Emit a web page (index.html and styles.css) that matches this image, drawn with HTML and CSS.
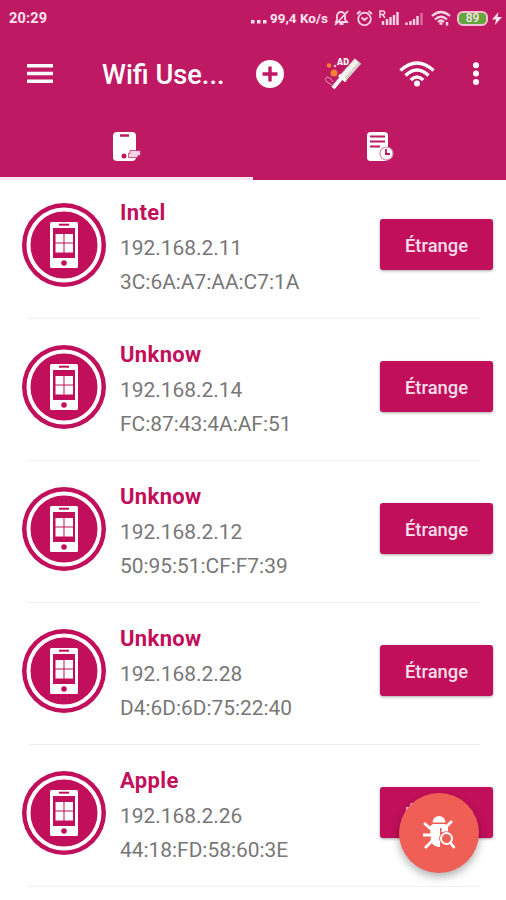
FILE: index.html
```html
<!DOCTYPE html>
<html lang="fr">
<head>
    <meta charset="UTF-8">
    <meta name="viewport" content="width=device-width, initial-scale=1.0">
    <title>Wifi Users</title>
    <link rel="stylesheet" href="styles.css">
</head>
<body>

    <!-- Shared icon for the device list -->
    <svg class="sprite">
        <symbol id="device" viewBox="0 0 84 84">
            <circle cx="42" cy="42" r="42" fill="#c20f5b"/>
            <circle cx="42" cy="42" r="35.5" fill="none" stroke="#fff" stroke-width="4"/>
            <rect x="28" y="19" width="28" height="46" rx="1.5" fill="#fff"/>
            <path d="M37 21.7h10" stroke="#c20f5b" stroke-width="2"/>
            <rect x="31" y="25" width="22" height="30" fill="#c20f5b"/>
            <path d="M33.500 31h8v8.500h-8zM42.500 31h8.500v8.500h-8.500zM33.500 40.500h8v9h-8zM42.500 40.500h8.500v9h-8.500z" fill="#fff"/>
            <circle cx="42" cy="60" r="2.800" fill="#c20f5b"/>
        </symbol>
    </svg>

    <header class="header">
        <div class="status-bar">
            <span class="time">20:29</span>
            <svg class="dots" width="18" height="5" viewBox="0 0 18 5"><path fill="#ffe4f0" d="M1 1h3.500v3.500H1zM7 1h3.500v3.500H7zM13 1h3.500v3.500H13z"/></svg>
            <span class="speed">99,4 Ko/s</span>
            <svg class="bell" width="17" height="16" viewBox="0 0 17 16" fill="none" stroke="#fbd5e6" stroke-width="1.800">
                <path d="M3 12h11l-2-2.500V6a4 4 0 0 0-8 0v3.500zM6.500 14h4M2 15L15 1"/>
            </svg>
            <svg class="alarm" width="17" height="17" viewBox="0 0 17 17" fill="none" stroke="#fbd5e6" stroke-width="1.800">
                <circle cx="8.500" cy="9" r="6.300"/>
                <path d="M1 4l3.500-3M16 4l-3.500-3M5.500 7.500l3 2.500 3-2.500"/>
            </svg>
            <svg class="signal" width="20" height="16" viewBox="0 0 20 16" fill="none" stroke="#fbd5e6">
                <path stroke-width="2.400" d="M4 15v-4M8 15V9M11.500 15V7M15 15V5M18.500 15V2"/>
                <path stroke-width="1.500" d="M1 8V1h3a1.500 1.500 0 0 1 0 3.500H1M3.500 4.500L6 8"/>
            </svg>
            <svg class="signal-two" width="19" height="14" viewBox="0 0 19 14" fill="none" stroke="#fbd5e6" stroke-width="2.400">
                <path d="M1.500 13v-2.500M5.500 13V9M9 13V7M12.500 13V4"/>
                <path opacity=".45" d="M16.500 13V1"/>
            </svg>
            <svg class="wifi-small" width="20" height="16" viewBox="0 0 20 16" fill="none" stroke="#fbd5e6" stroke-width="2.200">
                <path d="M1 6q9-8 18 0M4 9.500q6-5.500 12 0M7 12q3-3 6 0"/>
                <path d="M8.500 13.500h3M16 12v3.500" stroke-width="2.500"/>
            </svg>
            <span class="battery">89</span>
            <svg class="bolt" width="10" height="13" viewBox="0 0 10 13"><path fill="#ffe4f0" d="M6.500 0L0 7.500h4L3 13l7-8H5.500z"/></svg>
        </div>

        <div class="toolbar">
            <svg class="menu" width="26" height="20" viewBox="0 0 26 20"><path fill="#fff" d="M0 0h26v3.500H0zM0 7.800h26v3.500H0zM0 15.500h26V19H0z"/></svg>
            <h1 class="title">Wifi Use...</h1>
            <svg class="add" width="28" height="28" viewBox="0 0 28 28">
                <circle cx="14" cy="14" r="14" fill="#fff"/>
                <path d="M14 6.500v15M6.500 14h15" stroke="#bf1963" stroke-width="3.400"/>
            </svg>
            <svg class="ad" width="40" height="34" viewBox="0 0 40 34">
                <path d="M10 31L20 19" stroke="#fff" stroke-width="4"/>
                <path d="M19 22L35 4" stroke="#d8cfcc" stroke-width="8.500"/>
                <path d="M18.500 21L33.500 4" stroke="#f7f3ed" stroke-width="4.500"/>
                <path d="M16 18l7 6" stroke="#fff" stroke-width="3"/>
                <path d="M9 28l-5-3q-3-4 0-5 4 0 6 5" stroke="#e998b7" fill="none"/>
                <circle cx="11" cy="16" r="3.500" fill="#f58232"/>
                <circle cx="6" cy="8.500" r="2.300" fill="#f58232"/>
                <circle cx="12" cy="9" r="1.300" fill="#f7c5d8"/>
                <text class="ad-label" x="14" y="8" fill="#fff">AD</text>
            </svg>
            <svg class="wifi" width="36" height="26" viewBox="0 0 36 26" fill="none" stroke="#fff" stroke-width="3.400">
                <path d="M1.500 9.500q16.500-15 33 0M6.500 14.500q11.500-11 23 0M11.800 19q6.200-6 12.400 0"/>
                <circle cx="18" cy="22.500" r="3" fill="#fff" stroke="none"/>
            </svg>
            <svg class="more" width="8" height="24" viewBox="0 0 8 24" fill="#fff">
                <circle cx="4" cy="3.200" r="3"/><circle cx="4" cy="11.600" r="3"/><circle cx="4" cy="20" r="3"/>
            </svg>
        </div>

        <nav class="tabs">
            <div class="tab active">
                <svg width="30" height="32" viewBox="0 0 30 32">
                    <rect x="1" y="1" width="23" height="29" rx="4" fill="#fff"/>
                    <path d="M8 4.500h9" stroke="#bf1963" stroke-width="2.500"/>
                    <circle cx="12" cy="25" r="2.500" fill="#bf1963"/>
                    <path d="M18 19.500h10.500v5H26v2H16.500v-4H18z" fill="#fbd5e6" stroke="#bf1963" stroke-width=".7"/>
                </svg>
            </div>
            <div class="tab">
                <svg width="28" height="32" viewBox="0 0 28 32">
                    <rect x="1" y="1" width="21" height="29" rx="3.500" fill="#fff"/>
                    <path d="M4 5.500h15M4 10.500h15M4 15.500h10" stroke="#bf1963" stroke-width="2.200"/>
                    <circle cx="20.500" cy="22.500" r="6.500" fill="#fff" stroke="#d98bae" stroke-width="1.200"/>
                    <path d="M20 18v5h4" stroke="#bf1963" stroke-width="1.800" fill="none"/>
                </svg>
            </div>
        </nav>
    </header>

    <main class="device-list">
        <div class="device">
            <svg class="device-icon"><use href="#device"/></svg>
            <div class="device-info">
                <h2>Intel</h2>
                <p>192.168.2.11</p>
                <p>3C:6A:A7:AA:C7:1A</p>
            </div>
            <button class="device-button">Étrange</button>
        </div>
        <div class="device">
            <svg class="device-icon"><use href="#device"/></svg>
            <div class="device-info">
                <h2>Unknow</h2>
                <p>192.168.2.14</p>
                <p>FC:87:43:4A:AF:51</p>
            </div>
            <button class="device-button">Étrange</button>
        </div>
        <div class="device">
            <svg class="device-icon"><use href="#device"/></svg>
            <div class="device-info">
                <h2>Unknow</h2>
                <p>192.168.2.12</p>
                <p>50:95:51:CF:F7:39</p>
            </div>
            <button class="device-button">Étrange</button>
        </div>
        <div class="device">
            <svg class="device-icon"><use href="#device"/></svg>
            <div class="device-info">
                <h2>Unknow</h2>
                <p>192.168.2.28</p>
                <p>D4:6D:6D:75:22:40</p>
            </div>
            <button class="device-button">Étrange</button>
        </div>
        <div class="device">
            <svg class="device-icon"><use href="#device"/></svg>
            <div class="device-info">
                <h2>Apple</h2>
                <p>192.168.2.26</p>
                <p>44:18:FD:58:60:3E</p>
            </div>
            <button class="device-button">Étrange</button>
        </div>
    </main>

    <!-- Floating scan button -->
    <div class="scan-button">
        <svg width="34" height="36" viewBox="0 0 34 36">
            <path d="M10.500 7.500a6.500 6.500 0 0 1 13 0z" fill="#fff"/>
            <path d="M8 11l3-2h12l3 2v6H18v15q-6 0-9-5z" fill="#fff"/>
            <path d="M2 8l8 7M30 6l-7 7M1 20h9M3 33l7-7" stroke="#fff" stroke-width="2.800" fill="none"/>
            <path d="M18.800 13v16" stroke="#f05f56" stroke-width="1.600"/>
            <circle cx="24.500" cy="23.500" r="7.300" fill="#f05f56"/>
            <circle cx="24.500" cy="23.500" r="5.500" fill="none" stroke="#fff" stroke-width="2"/>
            <path d="M28.500 28l4 5" stroke="#fff" stroke-width="2.800"/>
        </svg>
    </div>

</body>
</html>
```
FILE: styles.css
```css
* {
    box-sizing: border-box;
}

body {
    margin: 0;
    height: 900px;
    overflow: hidden;
    background-color: #fff;
    font-family: Roboto, sans-serif;
}

svg {
    display: block;
    flex-shrink: 0;
}

.sprite {
    display: none;
}

.header {
    height: 180px;
    background-color: #bf1963;
    color: #fff;
}

.status-bar {
    display: flex;
    align-items: center;
    height: 36px;
    padding-left: 9px;
    color: #ffe4f0;
    font-weight: 500;
}

.time {
    width: 241px;
    font-size: 14.5px;
    font-weight: 700;
    letter-spacing: 0.2px;
}

.dots {
    margin-top: 7px;
}

.speed {
    width: 65px;
    padding-left: 2px;
    font-size: 13.5px;
    font-weight: 700;
    white-space: nowrap;
}

.alarm {
    margin-left: 6px;
}

.signal {
    margin-left: 6px;
}

.signal-two {
    margin-left: 6px;
    margin-top: 2px;
}

.wifi-small {
    margin-left: 7px;
}

.battery {
    width: 31px;
    height: 15px;
    margin-left: 6px;
    border: 2px solid #f3bdd4;
    border-radius: 6px;
    background-color: #63a63a;
    font-size: 12px;
    line-height: 11px;
    text-align: center;
}

.bolt {
    margin-left: 4px;
}

.toolbar {
    display: flex;
    align-items: center;
    height: 75px;
    padding-left: 27px;
}

.title {
    width: 154px;
    margin: 3px 0 0 49px;
    font-size: 27.2px;
    font-weight: 500;
    line-height: 34px;
}

.ad {
    margin-left: 39px;
}

.ad-label {
    font-size: 9px;
    font-weight: 900;
}

.wifi {
    margin-left: 36px;
}

.more {
    margin-left: 37px;
}

.tabs {
    display: flex;
    height: 69px;
}

.tab {
    display: flex;
    justify-content: center;
    width: 50%;
    padding-top: 20px;
}

.active {
    border-bottom: 3px solid #fbe6ef;
}

.device {
    display: flex;
    align-items: flex-start;
    position: relative;
    height: 142px;
    padding: 26px 13px 0 22px;
}

.device:first-child {
    height: 139px;
    padding-top: 23px;
}

.device::after {
    content: "";
    position: absolute;
    left: 28px;
    right: 26px;
    bottom: 0;
    height: 1px;
    background-color: #efefef;
}

.device-icon {
    width: 84px;
    height: 84px;
}

.device-info {
    flex: 1;
    margin: -8px 0 0 14px;
}

.device-info h2 {
    margin: 0;
    color: #c20f5b;
    font-size: 22px;
    font-weight: 700;
    letter-spacing: 0.35px;
    line-height: 36px;
}

.device-info p {
    margin: 0;
    color: #777;
    font-size: 20.9px;
    line-height: 34px;
}

.device-button {
    width: 113px;
    height: 51px;
    margin-top: 16px;
    padding: 2px 0 0;
    border: none;
    border-radius: 3px;
    background-color: #c20f5b;
    color: #fbdfeb;
    font-family: inherit;
    font-size: 18.4px;
    font-weight: 500;
    box-shadow: 0 1px 3px rgba(0, 0, 0, 0.35);
}

.scan-button {
    position: fixed;
    left: 399px;
    top: 793px;
    display: flex;
    align-items: center;
    justify-content: center;
    width: 80px;
    height: 80px;
    border-radius: 50%;
    background-color: #f05f56;
    box-shadow: 0 4px 8px rgba(0, 0, 0, 0.3);
}
```
